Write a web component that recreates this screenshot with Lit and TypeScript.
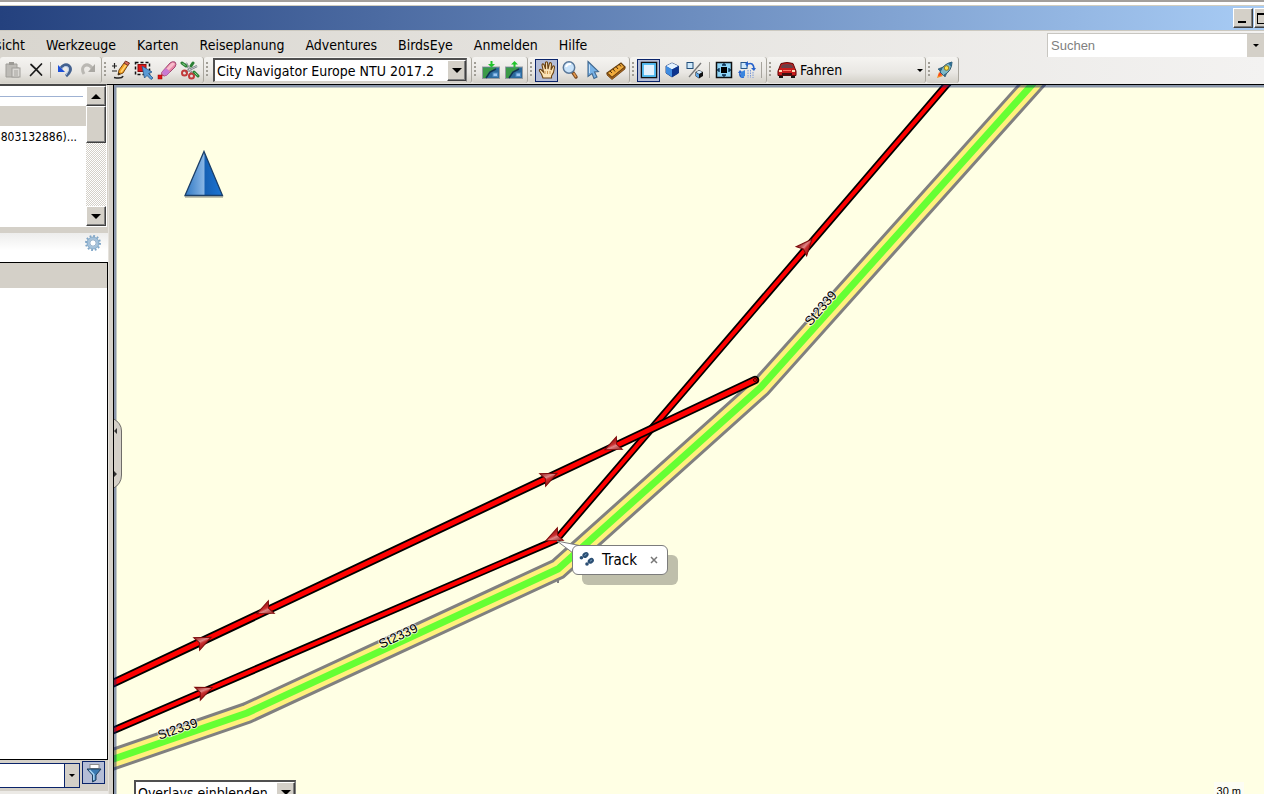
import { LitElement, html, svg, css, TemplateResult } from "lit";
import { customElement } from "lit/decorators.js";

const icon = (body: TemplateResult) =>
  html`<svg width="20" height="20" viewBox="0 0 20 20" fill="none" aria-hidden="true">${body}</svg>`;

const caret = (w = 12, h = 6) =>
  html`<svg width="${w}" height="${h}" viewBox="0 0 12 6" aria-hidden="true"><path d="M0 0H12L6 6Z" fill="#000" /></svg>`;

const caretUp = html`<svg width="10" height="5" viewBox="0 0 12 6" aria-hidden="true"><path d="M0 6H12L6 0Z" fill="#000" /></svg>`;

const mapTile = (arrow: string) => svg`
  <rect x="1.500" y="7" width="17" height="11.500" fill="#2c6a9c" stroke="#979ca2" />
  <path d="M2 7.500H16L12 10L8 12L5 18H2Z" fill="#3c9a48" />
  <path d="M5 18L9 12L15 9" stroke="#14344f" stroke-width="1.500" />
  <rect x="12" y="13" width="4.500" height="3.500" fill="#9cc8f2" stroke="#4a87c0" />
  <path d="${arrow}" fill="#22c42c" />`;

const icons = {
  paste: icon(svg`<path d="M3 4H14V8H16V17H3Z" fill="#bdbbb6" stroke="#a09e99" /><rect x="6" y="2" width="5" height="3" fill="#9c9a95" />
    <rect x="9" y="8" width="8" height="9" fill="#dad8d4" stroke="#a09e99" /><path d="M11 11H15M11 13H15M11 15H15" stroke="#a5a39e" />`),
  remove: icon(svg`<path d="M5 4.500Q10 9 15.500 15M15.500 4L4.500 15.500" stroke="#1c1c1c" stroke-width="1.700" stroke-linecap="round" />`),
  undo: icon(svg`<path d="M6 8Q10 3 14 6Q18 10 11 16" stroke="#43618f" stroke-width="3" /><path d="M7 8.500Q10 5 13 7Q15 10 11 15" stroke="#b9cdeb" />
    <path d="M3 5V12H10Z" fill="#1d50d8" />`),
  redo: icon(svg`<path d="M14 8Q10 3 6 6Q3 9 6 14" stroke="#bab8b3" stroke-width="3" /><path d="M17 4V12H10Z" fill="#aaa8a3" />`),
  pencil: icon(svg`<path d="M1 6H6M3.500 3V8.500M1 11H6" stroke="#222" stroke-width="1.200" /><path d="M3 17.500Q11 19 12 16" stroke="#222" stroke-width="1.500" />
    <path d="M7 15L8 10L13 3L17 5L12 13Z" fill="#f6a321" stroke="#7a4a12" /><path d="M10 12L15 5" stroke="#ffd77a" stroke-width="1.500" />
    <path d="M13 3L14.500 1L18.500 3L17 5.500Z" fill="#d66a5a" stroke="#7a3a2a" /><path d="M7 15L7.500 12.500L9.500 14Z" fill="#222" />`),
  select: icon(svg`<rect x="1.500" y="2.500" width="14" height="12" stroke="#111" stroke-width="1.500" stroke-dasharray="3 2" />
    <rect x="4" y="4.500" width="8" height="7" fill="#e01818" stroke="#8c0d0d" /><path d="M8 6L18 12L14.500 13.500L19 18L17 19.500L13 15.500L10.500 18Z" fill="#5a9ad4" stroke="#27588c" stroke-width=".8" />`),
  eraser: icon(svg`<path d="M5 12L13 3Q15 1 18 2Q20 4 18 7L10 15Q7 17 5 15Q4 14 5 12Z" fill="#e684a4" stroke="#a24a72" />
    <path d="M9 9L14 3.500Q16 2 18 4L12 10Z" fill="#f8bccb" /><path d="M5 12L9 8L13 12L9.500 15.500Q6 16 5 12Z" fill="#c87ad2" /><rect x="1" y="15" width="4" height="4" fill="#e01515" stroke="#900" stroke-width=".5" />`),
  scissors: icon(svg`<path d="M6 3L12 14M17 6L5 12" stroke="#6d7277" stroke-width="2" /><path d="M6 3L12 14M17 6L5 12" stroke="#dfe3e6" stroke-width=".8" />
    <circle cx="4.500" cy="13" r="2.500" stroke="#c13a3a" stroke-width="2" /><circle cx="11.500" cy="16" r="2.500" stroke="#c13a3a" stroke-width="2" />
    <path d="M2 3L6 6M14 12L18 16M13 3L11 6" stroke="#2c7f35" stroke-width="3" stroke-linecap="round" /><path d="M2.500 3.500L5.500 5.500M14.500 12.500L17.500 15.500" stroke="#8bdf8f" />`),
  receive: icon(mapTile("M9.500 1H11.500V4H14L10.500 7.500L7 4H9.500Z")),
  send: icon(mapTile("M9.500 7.500H11.500V4.500H14L10.500 1L7 4.500H9.500Z")),
  hand: icon(svg`<path d="M6 18Q5 14 2.500 11Q2 9 4 9.500L6.500 12L5 5Q5.500 3 7 4.500L8.500 9L8.500 2.500Q9.500 1 10.500 2.500L11 9L12.500 3Q14 2 14.500 4L14 10L16 6Q17.500 5.500 17.500 7.500Q17 13 14.500 16V18Z" fill="#fce3b5" stroke="#6b4312" stroke-width="1.100" />
    <path d="M8 11V14M10.500 11V14M13 11V14" stroke="#c99450" />`),
  zoom: icon(svg`<path d="M12.500 12L16 17" stroke="#7b4c25" stroke-width="3.500" stroke-linecap="round" /><path d="M13.500 13L16 17" stroke="#e89a4a" stroke-width="1.500" />
    <circle cx="9" cy="7.500" r="5.700" fill="#c9e3fa" stroke="#5a7899" stroke-width="1.500" /><path d="M6 7Q7 3.500 11 4" stroke="#fff" stroke-width="2" />`),
  pointer: icon(svg`<path d="M5 1.500L15.500 11.500L11.500 12L14 17L11 18.500L9 13.500L5 16.500Z" fill="#78b2e6" stroke="#41688f" stroke-width="1.100" /><path d="M6.500 4.500V13" stroke="#c7e2fa" />`),
  ruler: icon(svg`<path d="M1 13L15 3L19 7L6 17.500Z" fill="#f0ab3c" stroke="#6b4210" stroke-width="1.200" /><path d="M1 13V15L6 19.500L19 9V7L6 17.500Z" fill="#a9641a" stroke="#6b4210" stroke-width=".8" />
    <path d="M4 11L6 13M7 9L9 11.500M10 6.500L12 9M13 4L15 6.500" stroke="#4b2d08" />`),
  flat: icon(svg`<rect x="2.500" y="2.500" width="15" height="15" fill="#cde9fb" stroke="#111" stroke-width="1.500" /><rect x="4" y="4" width="12" height="12" fill="#e2f1fd" stroke="#45b5ee" stroke-width="1.700" />`),
  cube: icon(svg`<path d="M10 3L16.500 6V13L10 17L4 13V6Z" fill="#1454c4" stroke="#0c2a66" stroke-width=".8" /><path d="M10 3L16.500 6L10 9.500L4 6Z" fill="#e4f3ff" />
    <path d="M4 6L10 9.500V17L4 13Z" fill="#3f8ce0" /><path d="M10 9.500L16.500 6V13L10 17Z" fill="#0d348e" />`),
  toggle3d: icon(svg`<rect x="2" y="2.500" width="6" height="6" fill="#cfe9fb" stroke="#234f7a" /><path d="M16 3L4 17" stroke="#777" stroke-width="1.300" />
    <path d="M14 10L18 12V16L14 18.500L10.500 16V12Z" fill="#111" /><path d="M14 10.500L17.500 12L14 14L11 12Z" fill="#d5ecff" /><path d="M11 12.500L14 14.500V18L11 16Z" fill="#5ea8ea" />`),
  fit: icon(svg`<rect x="2.500" y="2.500" width="15" height="15" fill="#8fd6f8" stroke="#111" stroke-width="1.500" /><rect x="7" y="7" width="6" height="6" fill="#000" />
    <path d="M10 3V5M10 15V17M3 10H5M15 10H17M8 5H12M8 15H12M5 8V12M15 8V12" stroke="#052a4c" stroke-width="1.300" />`),
  rotate: icon(svg`<rect x="4" y="2.500" width="6" height="6" fill="#cfe9fb" stroke="#27588c" /><path d="M11 4Q16 2 17 8M7 17Q2 18 3 12" stroke="#2763cc" stroke-width="1.600" />
    <path d="M11 1V7L8 4ZM14 8H19L17 11ZM1 13L3 10L6 13Z" fill="#2763cc" /><path d="M4 12L8 10V16L4 18Z" fill="#3b86df" /><path d="M11 10V18M13.500 10V18M16 12V18" stroke="#7898d8" stroke-dasharray="1.500 1" />`),
  car: icon(svg`<path d="M2 15H6V18H2ZM14 15H18V18H14Z" fill="#151515" /><path d="M4 3.500Q10 1.500 16 3.500L18 8.500Q19.500 10 19 15.500H1Q.5 10 2 8.500Z" fill="#c81d1d" stroke="#5e0a0a" />
    <path d="M5 4.800Q10 3.300 15 4.800L16.500 8H3.500Z" fill="#6a4048" /><path d="M5 13H15V15H5Z" fill="#3c1010" /><path d="M2 10H5V12H2ZM15 10H18V12H15Z" fill="#ffdcb8" />
    <path d="M6 10.500H14" stroke="#ff7868" />`),
  rocket: icon(svg`<path d="M2 18L4 12L8 16Z" fill="#f58a1e" /><path d="M3 16L5 12L7 15Z" fill="#fb3b1c" /><path d="M3 9L8 7L6 12ZM10 17L12.500 11.500L8 14Z" fill="#2e6f96" stroke="#1c4560" stroke-width=".6" />
    <path d="M5 12Q8 4 17 2Q17 11 8.500 15.500Z" fill="#7db8c8" stroke="#315b70" /><path d="M13 3.500L17 2L16 6.500Z" fill="#2e6f96" /><circle cx="11.500" cy="8" r="2.300" fill="#ffe14a" stroke="#8d7a20" />`),
  gear: icon(svg`<circle cx="10" cy="10" r="7" stroke="#7fa6c8" stroke-width="2" stroke-dasharray="1.800 1.865" /><circle cx="10" cy="10" r="4.800" stroke="#a3c2dc" stroke-width="2.600" />
    <circle cx="10" cy="10" r="3.200" stroke="#6d93b5" stroke-width=".8" fill="#fff" /><circle cx="10" cy="10" r="6" stroke="#6d93b5" stroke-width=".6" />`),
  filter: icon(svg`<rect x="6" y="1.500" width="9" height="4" fill="#fff" stroke="#8a8a8a" /><path d="M3 6H17L12 12V17L8.500 19V12Z" fill="#3b7ab2" stroke="#1e3f5e" /><path d="M5.500 7L9.800 11.500V17" stroke="#a7d4f5" stroke-width="1.500" />`),
  steps: icon(svg`<g fill="#2b4f74"><ellipse cx="7.500" cy="5" rx="3.300" ry="2.600" transform="rotate(-35 7.500 5)" /><ellipse cx="3.400" cy="7.700" rx="1.800" ry="1.700" />
    <ellipse cx="12.800" cy="10.800" rx="3.300" ry="2.600" transform="rotate(-35 12.800 10.800)" /><ellipse cx="9" cy="14" rx="1.800" ry="1.700" /></g><path d="M6.500 5.500L8.500 4M12 11.300L14 9.800" stroke="#7ea2c3" />`),
};

const ROAD = "M105 762L247 713L558 569L761 387L1038 78";
const TRACK_LOW = "M105 734L556 540L955 75";
const TRACK_HIGH = "M105 687L755 380";
const ARROWS: [number, number, number][] = [
  [203, 641, -25], [265, 610, 155], [204, 691, -23], [549, 477, -25], [613, 446, 155], [554, 537, 155], [806, 246, -49],
];

@customElement("app-root")
export class AppRoot extends LitElement {
  static styles = css`
    :host { display: flex; flex-direction: column; height: 100vh; overflow: hidden; background: #d4d0c8; color: #000; font: 14px/20px "DejaVu Sans Condensed", Tahoma, sans-serif; }
    * { box-sizing: border-box; }
    button, select, input { font: inherit; color: inherit; margin: 0; padding: 0; border: 0; border-radius: 0; background: none; outline: 0; }
    select { appearance: none; }
    svg { display: block; flex: none; }
    .edge { flex: none; height: 6px; border-top: 2px solid #a39f9b; border-bottom: 1px solid #d0cdbf; background: #fff; }
    .title { flex: none; display: flex; justify-content: flex-end; height: 24px; padding-top: 2px; background: linear-gradient(90deg, #24417e, #a8ccf5); }
    .winbtns { display: flex; width: 31px; overflow: hidden; gap: 1px; }
    .bevel { display: flex; align-items: center; justify-content: center; background: #d4d0c8; border: 1px solid; border-color: #fff #404040 #404040 #fff; box-shadow: inset -1px -1px #808080; }
    .win { flex: none; width: 20px; height: 20px; }
    .top { flex: none; background: linear-gradient(90deg, #d9d6cf, #f3f2f1); border-bottom: 1px solid #000; }
    .menubar { display: flex; justify-content: space-between; height: 27px; border-top: 1px solid #ccc9c0; }
    .menu { display: flex; align-items: center; gap: 21px; height: 28px; }
    .menu .cut { width: 25px; direction: rtl; white-space: nowrap; }
    .search { display: flex; width: 217px; margin-top: 2px; border: solid #c8c6c1; border-width: 1px 0 0 1px; background: #fff; }
    .search input { flex: 1; min-width: 0; padding-left: 3px; font: 13px/20px "Liberation Sans", Arial, sans-serif; }
    .search input::placeholder { color: #808080; opacity: 1; }
    .search button { display: grid; place-items: center; width: 17px; background: #d4d0c8; }
    .tools { display: flex; height: 27px; padding-bottom: 1px; }
    .group { display: flex; align-items: center; height: 26px; padding: 0 2px 0 7px; border-right: 1px solid #aaa79f; border-radius: 3px; background: linear-gradient(#f5f4f1, #e9e7e3 60%, #d3d0c8); }
    .group.first { padding: 0 2px 0 1px; }
    .grip { width: 2px; height: 16px; margin: 0 3px 0 -5px; background: repeating-linear-gradient(#a19e96 0 2px, transparent 2px 4px); }
    .tool { display: grid; place-items: center; width: 23px; height: 23px; border: 1px solid transparent; }
    .tool.on { background: #b4bdd6; border-color: #0a246a; }
    .sep { width: 1px; height: 16px; margin: 0 2px 0 3px; background: #a6a39c; }
    .combo { display: grid; grid-template-columns: 1fr 19px; background: #fff; border: solid; border-width: 2px 1px 1px 2px; border-color: #505050 #808080 #d4d0c8 #505050; }
    .combo select { grid-area: 1 / 1 / 2 / 3; padding-left: 2px; min-width: 0; }
    .combo .bevel { grid-area: 1 / 2; pointer-events: none; }
    .product { width: 254px; height: 24px; margin: 0 2px; }
    .activity { display: grid; grid-template-columns: 25px 118px 6px; align-items: center; }
    .activity svg { justify-self: center; }
    .activity select { grid-area: 1 / 2 / 2 / 4; padding-left: 1px; }
    .activity .arrow { grid-area: 1 / 3; pointer-events: none; }
    .main { flex: 1; min-height: 0; display: flex; }
    .side { flex: none; width: 108px; display: flex; flex-direction: column; }
    .tree { flex: none; display: flex; height: 143px; margin-top: -1px; width: 107px; background: #fff; border-top: 2px solid #484848; border-right: 1px solid #fff; border-bottom: 1px solid #fff; }
    .rows { flex: 1; min-width: 0; }
    .group-line { height: 20px; padding-top: 10px; }
    .group-line div { height: 1px; margin-right: 3px; background: #9fb2d3; }
    .row-on { height: 20px; background: #d4d0c8; }
    .row { display: flex; justify-content: flex-end; height: 22px; padding-right: 9px; overflow: hidden; font-size: 12px; line-height: 22px; white-space: nowrap; }
    .scroll { width: 20px; display: flex; flex-direction: column; background: repeating-conic-gradient(#d4d0c8 0 25%, #fff 0 50%) 0 0 / 2px 2px; }
    .scroll .bevel { height: 20px; }
    .scroll .thumb { height: 37px; margin-bottom: auto; }
    .head { flex: none; display: flex; justify-content: flex-end; align-items: flex-start; height: 29px; margin-top: 6px; padding: 0 5px; background: linear-gradient(#ededec, #fff 60%); }
    .list { flex: 1; background: #fff; border: solid #000; border-width: 1px 1px 1px 0; }
    .list-head { height: 25px; background: #d4d0c8; }
    .filterbar { flex: none; display: flex; align-items: flex-start; height: 31px; gap: 2px; padding: 1px 3px 0 0; }
    .field { flex: 1; min-width: 0; display: flex; height: 25px; margin-top: 2px; border: 1px solid #0a246a; border-left: 0; background: #fff; }
    .field input { flex: 1; min-width: 0; }
    .field button { display: grid; place-items: center; width: 15px; border-left: 1px solid #0a246a; background: #d4d0c8; }
    .foot { flex: none; height: 3px; background: #eceae6; }
    .split { flex: none; width: 5px; border-left: 1px solid #e5e2dc; }
    .map { flex: 1; min-width: 0; position: relative; overflow: hidden; background: #ffffe4; border-left: 1px solid #000; }
    .canvas { width: 100%; height: 100%; }
    .road-name { font: 13px "Liberation Sans", Arial, sans-serif; text-anchor: middle; paint-order: stroke; stroke: #fff; stroke-width: 2px; stroke-opacity: .7; }
    .handle { position: absolute; left: -1px; top: 333px; width: 9px; height: 71px; }
    .bubble { position: absolute; left: 458px; top: 460px; display: flex; align-items: center; width: 96px; height: 30px; padding: 0 5px; border: 1px solid #7c7c7c; border-radius: 6px; background: #fff; box-shadow: 10px 10px rgba(0, 0, 0, .25); font-size: 15px; }
    .bubble span { flex: 1; padding-left: 4px; }
    .bubble button { display: grid; place-items: center; width: 16px; height: 16px; }
    .overlay { position: absolute; left: 20px; bottom: -10px; width: 162px; height: 24px; }
    .scale { position: absolute; right: 20px; bottom: -6px; padding: 0 3px; font: 11px/18px "Liberation Sans", Arial, sans-serif; background: #fdfdf4; }
  `;

  private tool(name: keyof typeof icons, label: string, on = false) {
    return html`<button class="tool ${on ? "on" : ""}" aria-label=${label}>${icons[name]}</button>`;
  }

  render() {
    const grip = html`<div class="grip"></div>`;
    const sep = html`<div class="sep"></div>`;
    return html`
      <div class="edge"></div>
      <header class="title">
        <div class="winbtns">
          <button class="bevel win" aria-label="Minimieren"><svg width="12" height="12"><path d="M1 9H9V11H1Z" /></svg></button>
          <button class="bevel win" aria-label="Maximieren"><svg width="14" height="12"><path d="M0 1H14V12H0ZM1 3V11H13V3Z" fill-rule="evenodd" /></svg></button>
        </div>
      </header>
      <div class="top">
        <div class="menubar">
          <nav class="menu">
            <button class="cut">sicht</button>
            ${["Werkzeuge", "Karten", "Reiseplanung", "Adventures", "BirdsEye", "Anmelden", "Hilfe"].map((m) => html`<button>${m}</button>`)}
          </nav>
          <div class="search">
            <input type="text" placeholder="Suchen" aria-label="Suchen" />
            <button aria-label="Suchoptionen">${caret(6, 3)}</button>
          </div>
        </div>
        <div class="tools">
          <div class="group first">${this.tool("paste", "Einfügen")}${this.tool("remove", "Löschen")}${sep}${this.tool("undo", "Rückgängig")}${this.tool("redo", "Wiederholen")}</div>
          <div class="group">${grip}${this.tool("pencil", "Zeichnen")}${this.tool("select", "Auswählen")}${this.tool("eraser", "Radieren")}${this.tool("scissors", "Teilen")}</div>
          <div class="group">${grip}
            <div class="combo product">
              <select aria-label="Kartenprodukt"><option>City Navigator Europe NTU 2017.2</option></select>
              <span class="bevel">${caret(10, 5)}</span>
            </div>
          </div>
          <div class="group">${grip}${this.tool("receive", "Vom Gerät empfangen")}${this.tool("send", "An Gerät senden")}</div>
          <div class="group">${grip}${this.tool("hand", "Verschieben", true)}${this.tool("zoom", "Zoom")}${this.tool("pointer", "Zeiger")}${this.tool("ruler", "Messen")}</div>
          <div class="group">${grip}${this.tool("flat", "2D-Karte", true)}${this.tool("cube", "3D-Karte")}${this.tool("toggle3d", "2D/3D")}${sep}${this.tool("fit", "Einpassen")}${this.tool("rotate", "Drehen")}${sep}</div>
          <div class="group">${grip}
            <div class="activity">${icons.car}<select aria-label="Aktivität"><option>Fahren</option></select><span class="arrow">${caret(6, 3)}</span></div>
          </div>
          <div class="group">${grip}${this.tool("rocket", "Adventure")}</div>
        </div>
      </div>
      <div class="main">
        <aside class="side">
          <div class="tree">
            <div class="rows">
              <div class="group-line"><div></div></div>
              <div class="row-on"></div>
              <div class="row">3803132886)...</div>
            </div>
            <div class="scroll">
              <button class="bevel" aria-label="Nach oben">${caretUp}</button>
              <div class="bevel thumb"></div>
              <button class="bevel" aria-label="Nach unten">${caret(10, 5)}</button>
            </div>
          </div>
          <div class="head"><button aria-label="Einstellungen">${icons.gear}</button></div>
          <div class="list"><div class="list-head"></div></div>
          <div class="filterbar">
            <div class="field"><input type="text" aria-label="Filter" /><button aria-label="Filterliste">${caret(6, 3)}</button></div>
            ${this.tool("filter", "Filtern", true)}
          </div>
          <div class="foot"></div>
        </aside>
        <div class="split"></div>
        <main class="map">
          <svg class="canvas" role="img" aria-label="Karte">
            <defs>
              <linearGradient id="dart" x1="0" y1="0" x2="0" y2="1"><stop offset="0" stop-color="#8c1212" /><stop offset=".45" stop-color="#e08484" /><stop offset=".6" stop-color="#c83030" /><stop offset="1" stop-color="#a01212" /></linearGradient>
              <linearGradient id="north" x1="0" x2="1"><stop offset="0" stop-color="#2f78c4" /><stop offset=".5" stop-color="#86b4e4" /><stop offset=".54" stop-color="#1560b4" /><stop offset="1" stop-color="#1d76d4" /></linearGradient>
            </defs>
            <g transform="translate(-114 -85)" fill="none">
              <path d="M558 555V583" stroke="#808080" stroke-width="2" />
              <path d=${ROAD} stroke="#808080" stroke-width="22" />
              <path d=${ROAD} stroke="#fff07c" stroke-width="16" />
              <path d=${ROAD} stroke="#66ff33" stroke-width="7" />
              <path d=${TRACK_LOW} stroke="#000" stroke-width="7.500" stroke-linejoin="round" />
              <path d=${TRACK_LOW} stroke="#f00" stroke-width="4" />
              <path d=${TRACK_HIGH} stroke="#000" stroke-width="8.500" stroke-linecap="round" />
              <path d=${TRACK_HIGH} stroke="#f00" stroke-width="4.800" stroke-linecap="round" />
              <circle cx="755" cy="380" r="1.500" stroke="#400" />
              ${ARROWS.map(([x, y, a]) => svg`<path d="M9 0L-7 -7L-4 0L-7 7Z" fill="url(#dart)" stroke="#7e0c0c" transform="translate(${x} ${y}) rotate(${a})" />`)}
              <g fill="#000">
                <text class="road-name" transform="translate(824 311) rotate(-49)">St2339</text>
                <text class="road-name" transform="translate(400 640) rotate(-25)">St2339</text>
                <text class="road-name" transform="translate(179 733) rotate(-19)">St2339</text>
              </g>
              <path d="M185 197H223" stroke="#8a8a78" stroke-width="2" opacity=".5" />
              <path d="M204 151.500L222.500 195.500H185Z" fill="url(#north)" stroke="#1b3f68" stroke-width="1.300" />
              <path d="M557 541L582 546L573 553Z" fill="#fff" stroke="#7c7c7c" />
            </g>
            <path d="M0 0H3000V2.500H2.500V3000H0Z" fill="#0a246a" fill-opacity=".48" />
          </svg>
          <div class="handle">
            <svg width="9" height="71"><path d="M0 .5Q8.500 5 8.500 13V57Q8.500 66 0 70.500" fill="#d4d0c8" stroke="#6e6c68" /><path d="M1 13L4 10V16ZM4 56L1 53V59Z" fill="#333" /></svg>
          </div>
          <div class="bubble">${icons.steps}<span>Track</span><button aria-label="Schließen"><svg width="8" height="8"><path d="M1 1L7 7M7 1L1 7" stroke="#777" stroke-width="1.500" /></svg></button></div>
          <div class="combo overlay">
            <select aria-label="Overlays"><option>Overlays einblenden</option></select>
            <span class="bevel">${caret(10, 5)}</span>
          </div>
          <div class="scale">30 m</div>
        </main>
      </div>
    `;
  }
}
